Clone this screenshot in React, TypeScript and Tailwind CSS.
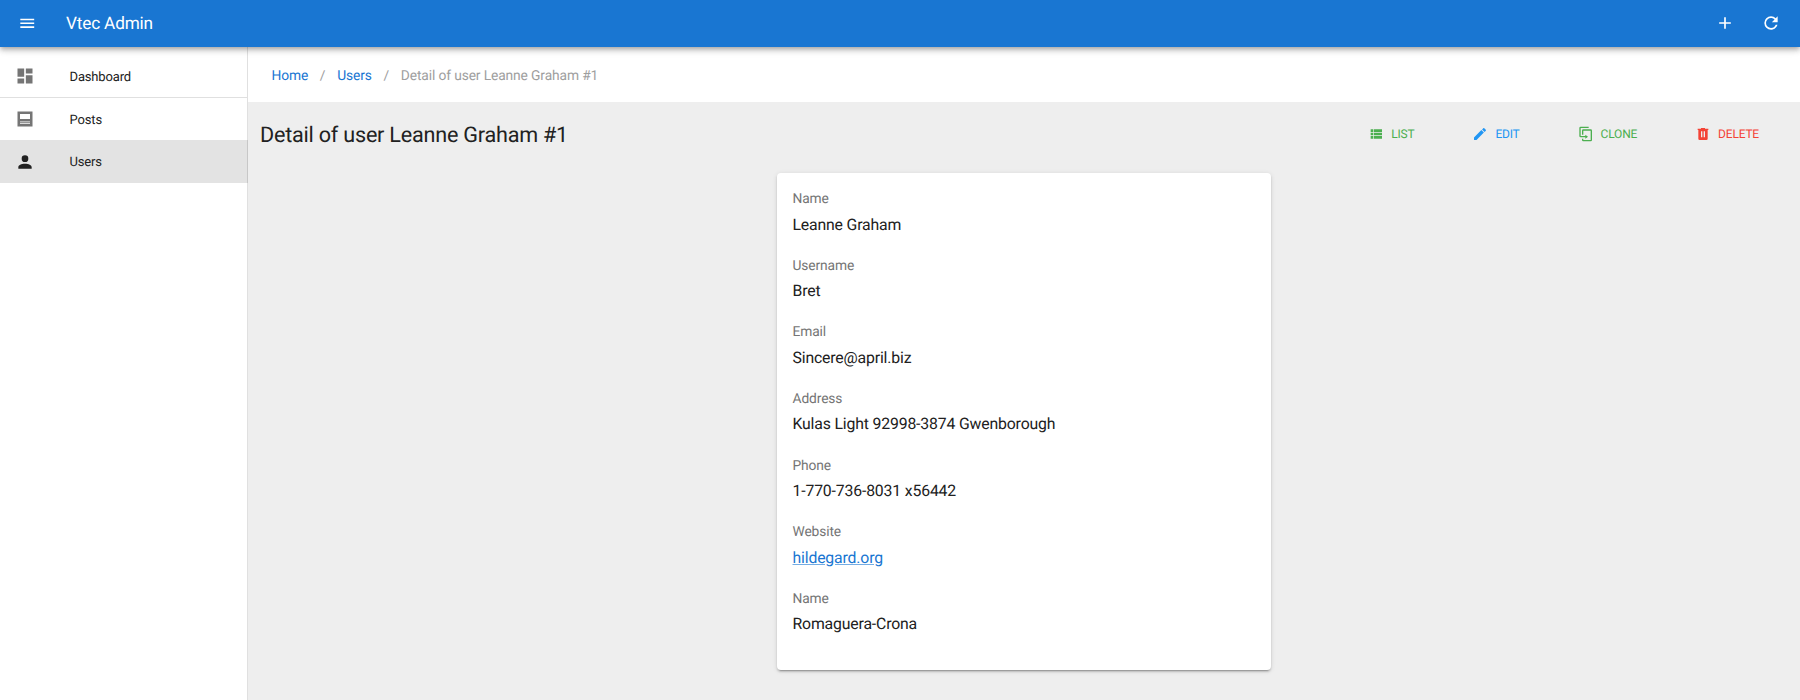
import React from 'react';

const paths = {
  menu: 'M3,6H21V8H3V6M3,11H21V13H3V11M3,16H21V18H3V16Z',
  plus: 'M19,13H13V19H11V13H5V11H11V5H13V11H19V13Z',
  refresh:
    'M17.65,6.35C16.2,4.9 14.21,4 12,4A8,8 0 0,0 4,12A8,8 0 0,0 12,20C15.73,20 18.84,17.45 19.73,14H17.65C16.83,16.33 14.61,18 12,18A6,6 0 0,1 6,12A6,6 0 0,1 12,6C13.66,6 15.14,6.69 16.22,7.78L13,11H20V4L17.65,6.35Z',
  dashboard: 'M13,3V9H21V3M13,21H21V11H13M3,21H11V15H3M3,13H11V3H3V13Z',
  post: 'M3,3V21H21V3H3M18,18H6V17H18V18M18,16H6V15H18V16M18,12H6V6H18V12Z',
  account:
    'M12,4A4,4 0 0,1 16,8A4,4 0 0,1 12,12A4,4 0 0,1 8,8A4,4 0 0,1 12,4M12,14C16.42,14 20,15.79 20,18V20H4V18C4,15.79 7.58,14 12,14Z',
  list: 'M9,5V9H21V5M9,19H21V15H9M9,14H21V10H9M4,9H8V5H4M4,19H8V15H4M4,14H8V10H4V14Z',
  pencil:
    'M20.71,7.04C21.1,6.65 21.1,6 20.71,5.63L18.37,3.29C18,2.9 17.35,2.9 16.96,3.29L15.12,5.12L18.87,8.87M3,17.25V21H6.75L17.81,9.93L14.06,6.18L3,17.25Z',
  clone:
    'M11,17H4A2,2 0 0,1 2,15V3A2,2 0 0,1 4,1H16V3H4V15H11V13L15,16L11,19V17M19,21V7H8V13H6V7A2,2 0 0,1 8,5H19A2,2 0 0,1 21,7V21A2,2 0 0,1 19,23H8A2,2 0 0,1 6,21V19H8V21H19Z',
  trash:
    'M9,3V4H4V6H5V19A2,2 0 0,0 7,21H17A2,2 0 0,0 19,19V6H20V4H15V3H9M9,8H11V17H9V8M13,8H15V17H13V8Z',
};

function Icon({ name, className }: { name: keyof typeof paths; className: string }) {
  return (
    <svg viewBox="0 0 24 24" fill="currentColor" className={`shrink-0 ${className}`}>
      <path d={paths[name]} />
    </svg>
  );
}

const fields = [
  { label: 'Name', value: 'Leanne Graham' },
  { label: 'Username', value: 'Bret' },
  { label: 'Email', value: 'Sincere@april.biz' },
  { label: 'Address', value: 'Kulas Light 92998-3874 Gwenborough' },
  { label: 'Phone', value: '1-770-736-8031 x56442' },
  { label: 'Website', value: 'hildegard.org', link: true },
  { label: 'Name', value: 'Romaguera-Crona' },
];

export default function App() {
  return (
    <div className="flex h-[700px] w-full flex-col overflow-hidden bg-white font-['Roboto',sans-serif] text-[#212121] [text-rendering:geometricPrecision]">
      <header className="relative z-10 flex h-[47px] shrink-0 items-center bg-[#1976d2] pb-px pl-[18px] pr-[19px] text-white shadow-[0_2px_4px_-1px_rgba(0,0,0,0.2),0_4px_5px_0_rgba(0,0,0,0.14),0_1px_10px_0_rgba(0,0,0,0.12)]">
        <Icon name="menu" className="size-[18.5px]" />
        <h1 className="ml-[29.5px] pt-px text-[17.2px] leading-6 tracking-[-0.17px]">Vtec Admin</h1>
        <Icon name="plus" className="ml-auto size-[20px]" />
        <Icon name="refresh" className="ml-[26.5px] size-[20px]" />
      </header>

      <div className="flex min-h-0 flex-1">
        <nav className="w-[248px] shrink-0 border-r border-black/12 bg-white pt-[7px] text-[13px] tracking-[-0.15px]">
          <a className="flex h-[44px] items-center border-b border-black/12 pl-[15px]">
            <Icon name="dashboard" className="size-[20px] text-[#757575]" />
            <span className="ml-[34.5px] pt-[4px]">Dashboard</span>
          </a>
          <a className="flex h-[42px] items-center pl-[15px]">
            <Icon name="post" className="size-[20px] text-[#757575]" />
            <span className="ml-[34.5px] pt-[3px]">Posts</span>
          </a>
          <a className="-mr-px flex h-[43px] items-center bg-black/11 pl-[15px]">
            <Icon name="account" className="size-[20px]" />
            <span className="ml-[34.5px] pt-[3px]">Users</span>
          </a>
        </nav>

        <main className="flex min-w-0 flex-1 flex-col bg-[#eeeeee]">
          <div className="flex h-[55px] shrink-0 items-center bg-white pl-[23.5px] pt-[3px] text-[13.8px] tracking-[-0.12px] text-[#9e9e9e]">
            <a className="text-[#1976d2]">Home</a>
            <span className="w-[29px] text-center">/</span>
            <a className="text-[#1976d2]">Users</a>
            <span className="w-[29px] text-center">/</span>
            <span>Detail of user Leanne Graham #1</span>
          </div>

          <div className="flex h-[64px] shrink-0 items-center pl-3 pr-[41px]">
            <h2 className="pt-[3px] text-[21.6px] leading-8 tracking-[-0.22px]">
              Detail of user Leanne Graham #1
            </h2>
            <div className="ml-auto flex items-center text-[12px] tracking-[-0.2px]">
              <a className="flex items-center text-[#4caf50]">
                <Icon name="list" className="size-[16px]" />
                <span className="ml-[7px]">LIST</span>
              </a>
              <a className="ml-[58px] flex items-center text-[#2196f3]">
                <Icon name="pencil" className="size-[16px]" />
                <span className="ml-[7px]">EDIT</span>
              </a>
              <a className="ml-[58px] flex items-center text-[#4caf50]">
                <Icon name="clone" className="size-[16px]" />
                <span className="ml-[7px]">CLONE</span>
              </a>
              <a className="ml-[58px] flex items-center text-[#f44336]">
                <Icon name="trash" className="size-[16px]" />
                <span className="ml-[7px]">DELETE</span>
              </a>
            </div>
          </div>

          <dl className="ml-[529px] mt-[7px] h-[497px] w-[494px] rounded-[4px] bg-white px-[15.5px] pt-[15.2px] shadow-[0_3px_1px_-2px_rgba(0,0,0,0.2),0_2px_2px_0_rgba(0,0,0,0.14),0_1px_5px_0_rgba(0,0,0,0.12)]">
            {fields.map((f, i) => (
              <div key={i} className="h-[66.6px]">
                <dt className="text-[13.8px] leading-[22px] tracking-[-0.12px] text-[#757575]">{f.label}</dt>
                <dd className="pt-[2.5px] text-[15.8px] leading-[24px] tracking-[-0.16px]">
                  {f.link ? (
                    <a className="text-[#1976d2] underline decoration-[#1976d2]/60">{f.value}</a>
                  ) : (
                    f.value
                  )}
                </dd>
              </div>
            ))}
          </dl>
        </main>
      </div>
    </div>
  );
}
